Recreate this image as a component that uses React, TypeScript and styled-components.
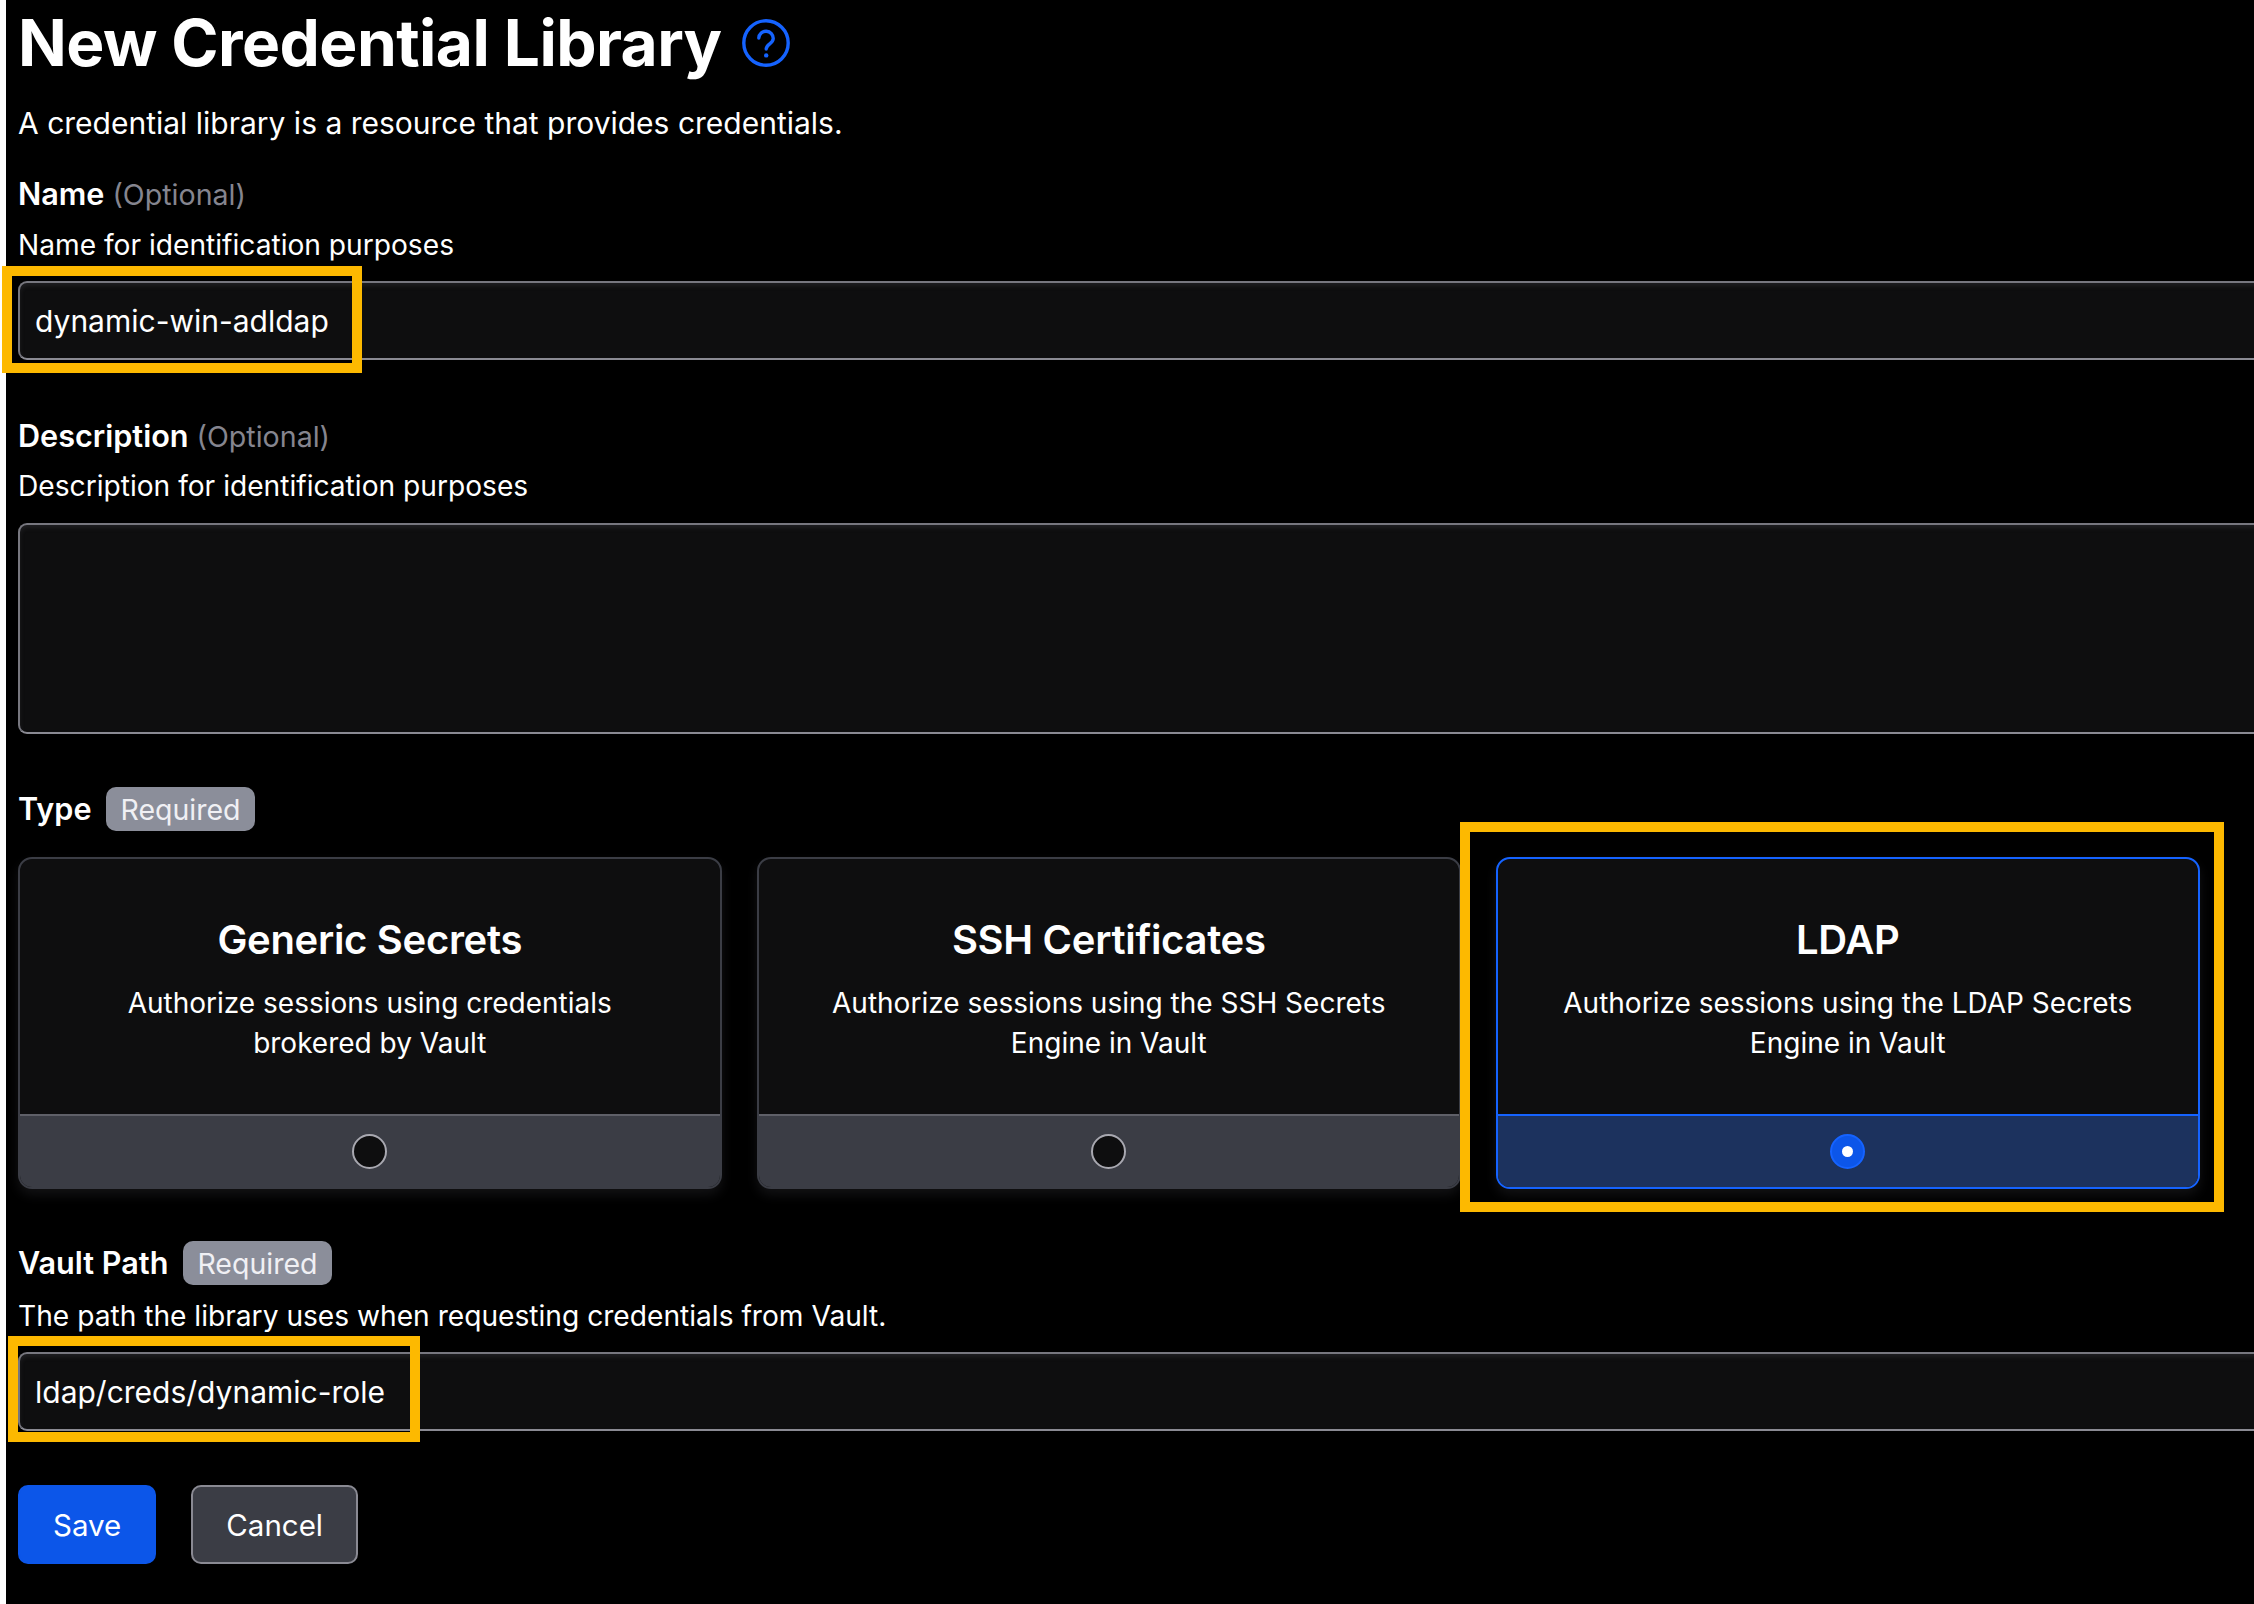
import { FC } from "react";
import styled, { createGlobalStyle } from "styled-components";

const GlobalStyle = createGlobalStyle`
  html, body {
    margin: 0;
    padding: 0;
    background: #fff;
  }
  body {
    font-family: Inter, "Liberation Sans", sans-serif;
    -webkit-font-smoothing: antialiased;
  }
`;

const Viewport = styled.div`
  position: relative;
  width: 2254px;
  height: 1604px;
  overflow: hidden;
  padding-left: 6px;
  box-sizing: border-box;
`;

const Page = styled.main`
  width: 2400px;
  height: 1604px;
  background: #000;
  color: #fff;
  padding: 0 0 0 12px;
  box-sizing: border-box;
`;

const TitleRow = styled.div`
  display: flex;
  align-items: center;
  gap: 20px;
  height: 86px;
`;

const Title = styled.h1`
  margin: 0;
  font-size: 64px;
  font-weight: 700;
  line-height: 86px;
  letter-spacing: -0.57px;
`;

const Lead = styled.p`
  margin: 14px 0 0;
  font-size: 30px;
  line-height: 46px;
`;

const Field = styled.div<{ $top: number }>`
  margin-top: ${(p) => p.$top}px;
`;

const LabelRow = styled.div`
  display: flex;
  align-items: center;
  gap: 15px;
  height: 44px;
`;

const Label = styled.label`
  font-size: 30.6px;
  font-weight: 600;
  line-height: 44px;
`;

const Optional = styled.span`
  font-size: 28.6px;
  font-weight: 400;
  color: #85858f;
  margin-left: 8px;
`;

const Badge = styled.span`
  display: inline-flex;
  align-items: center;
  height: 44px;
  padding: 0 14px;
  box-sizing: border-box;
  border-radius: 10px;
  background: #8b8e9a;
  color: #f0f0f4;
  font-size: 28.5px;
`;

const Help = styled.div<{ $top?: number }>`
  margin-top: ${(p) => p.$top ?? 6}px;
  font-size: 28.15px;
  line-height: 46px;
`;

const TextInput = styled.div`
  margin-top: 13px;
  height: 79px;
  width: 2360px;
  box-sizing: border-box;
  display: flex;
  align-items: center;
  padding: 0 15px;
  background: #0e0e0f;
  border: 2px solid #8a8a93;
  border-top-color: #77777f;
  border-left-color: #77777f;
  border-radius: 9px;
  box-shadow: inset 0 3px 4px rgba(60, 60, 66, 0.35);
  font-size: 30px;
`;

const TextArea = styled(TextInput)`
  margin-top: 14px;
  height: 211px;
`;

const CardGrid = styled.div`
  display: grid;
  grid-template-columns: repeat(3, 703.5px);
  gap: 35.5px;
  margin-top: 26px;
`;

const Card = styled.div<{ $active?: boolean }>`
  display: flex;
  flex-direction: column;
  height: 332px;
  box-sizing: border-box;
  border: 2px solid ${(p) => (p.$active ? "#1563ff" : "#3b3d45")};
  border-radius: 14px;
  background: #0e0e0f;
  overflow: hidden;
  box-shadow: 0 6px 12px rgba(60, 60, 66, 0.3);
`;

const CardBody = styled.div`
  flex: 1;
  text-align: center;
  padding: 56px 60px 0;
`;

const CardTitle = styled.div`
  font-size: 40px;
  font-weight: 600;
  line-height: 50px;
  letter-spacing: -0.3px;
`;

const CardText = styled.div`
  margin-top: 18px;
  font-size: 28px;
  line-height: 40px;
`;

const CardFooter = styled.div<{ $active?: boolean }>`
  height: 71px;
  display: flex;
  align-items: center;
  justify-content: center;
  border-top: 2px solid ${(p) => (p.$active ? "#1563ff" : "#5f6068")};
  background: ${(p) => (p.$active ? "#1c325e" : "#3b3d45")};
`;

const Radio = styled.span<{ $checked?: boolean }>`
  width: 35px;
  height: 35px;
  box-sizing: border-box;
  border-radius: 50%;
  display: flex;
  align-items: center;
  justify-content: center;
  border: 2px solid ${(p) => (p.$checked ? "#1563ff" : "#a8a8b0")};
  background: ${(p) => (p.$checked ? "#0c56e9" : "#0e0e0f")};

  &::after {
    content: "";
    display: ${(p) => (p.$checked ? "block" : "none")};
    width: 11px;
    height: 11px;
    border-radius: 50%;
    background: #fff;
  }
`;

const Actions = styled.div`
  display: flex;
  gap: 35px;
  margin-top: 54px;
`;

const Button = styled.button<{ $primary?: boolean }>`
  height: 79px;
  box-sizing: border-box;
  padding: 0 33px;
  border-radius: 10px;
  border: 2px solid ${(p) => (p.$primary ? "#0c56e9" : "#8a8a93")};
  background: ${(p) => (p.$primary ? "#0c56e9" : "#3b3d45")};
  color: #fff;
  font-family: inherit;
  font-size: 29.5px;
`;

const Highlight = styled.div<{ $x: number; $y: number; $w: number; $h: number }>`
  position: absolute;
  left: ${(p) => p.$x}px;
  top: ${(p) => p.$y}px;
  width: ${(p) => p.$w}px;
  height: ${(p) => p.$h}px;
  box-sizing: border-box;
  border: 10px solid #fdb900;
  pointer-events: none;
`;

const HelpIcon: FC = () => (
  <svg width="48" height="48" viewBox="0 0 24 24" fill="none" stroke="#1563ff" strokeWidth="1.7">
    <circle cx="12" cy="12" r="11.1" />
    <path d="M8.4 9.5a3.6 3.6 0 0 1 7.2.4c0 2.4-3.5 2.6-3.5 5.1" strokeLinecap="round" />
    <circle cx="12.1" cy="18.2" r="1.1" fill="#1563ff" stroke="none" />
  </svg>
);

const types = [
  {
    title: "Generic Secrets",
    lines: ["Authorize sessions using credentials", "brokered by Vault"],
  },
  {
    title: "SSH Certificates",
    lines: ["Authorize sessions using the SSH Secrets", "Engine in Vault"],
  },
  {
    title: "LDAP",
    lines: ["Authorize sessions using the LDAP Secrets", "Engine in Vault"],
    active: true,
  },
];

const App: FC = () => {
  return (
    <>
      <GlobalStyle />
      <Viewport>
        <Page>
          <TitleRow>
            <Title>New Credential Library</Title>
            <HelpIcon />
          </TitleRow>
          <Lead>A credential library is a resource that provides credentials.</Lead>

          <Field $top={26}>
            <LabelRow>
              <Label>
                Name<Optional>(Optional)</Optional>
              </Label>
            </LabelRow>
            <Help>Name for identification purposes</Help>
            <TextInput>dynamic-win-adldap</TextInput>
          </Field>

          <Field $top={54}>
            <LabelRow>
              <Label>
                Description<Optional>(Optional)</Optional>
              </Label>
            </LabelRow>
            <Help $top={5}>Description for identification purposes</Help>
            <TextArea />
          </Field>

          <Field $top={53}>
            <LabelRow>
              <Label>Type</Label>
              <Badge>Required</Badge>
            </LabelRow>
            <CardGrid>
              {types.map((t) => (
                <Card key={t.title} $active={t.active}>
                  <CardBody>
                    <CardTitle>{t.title}</CardTitle>
                    <CardText>
                      {t.lines[0]}
                      <br />
                      {t.lines[1]}
                    </CardText>
                  </CardBody>
                  <CardFooter $active={t.active}>
                    <Radio $checked={t.active} />
                  </CardFooter>
                </Card>
              ))}
            </CardGrid>
          </Field>

          <Field $top={52}>
            <LabelRow>
              <Label>Vault Path</Label>
              <Badge>Required</Badge>
            </LabelRow>
            <Help $top={8}>The path the library uses when requesting credentials from Vault.</Help>
            <TextInput>ldap/creds/dynamic-role</TextInput>
          </Field>

          <Actions>
            <Button $primary>Save</Button>
            <Button>Cancel</Button>
          </Actions>
        </Page>
        <Highlight $x={2} $y={266} $w={360} $h={107} />
        <Highlight $x={1460} $y={822} $w={764} $h={390} />
        <Highlight $x={8} $y={1336} $w={412} $h={106} />
      </Viewport>
    </>
  );
};

export default App;
